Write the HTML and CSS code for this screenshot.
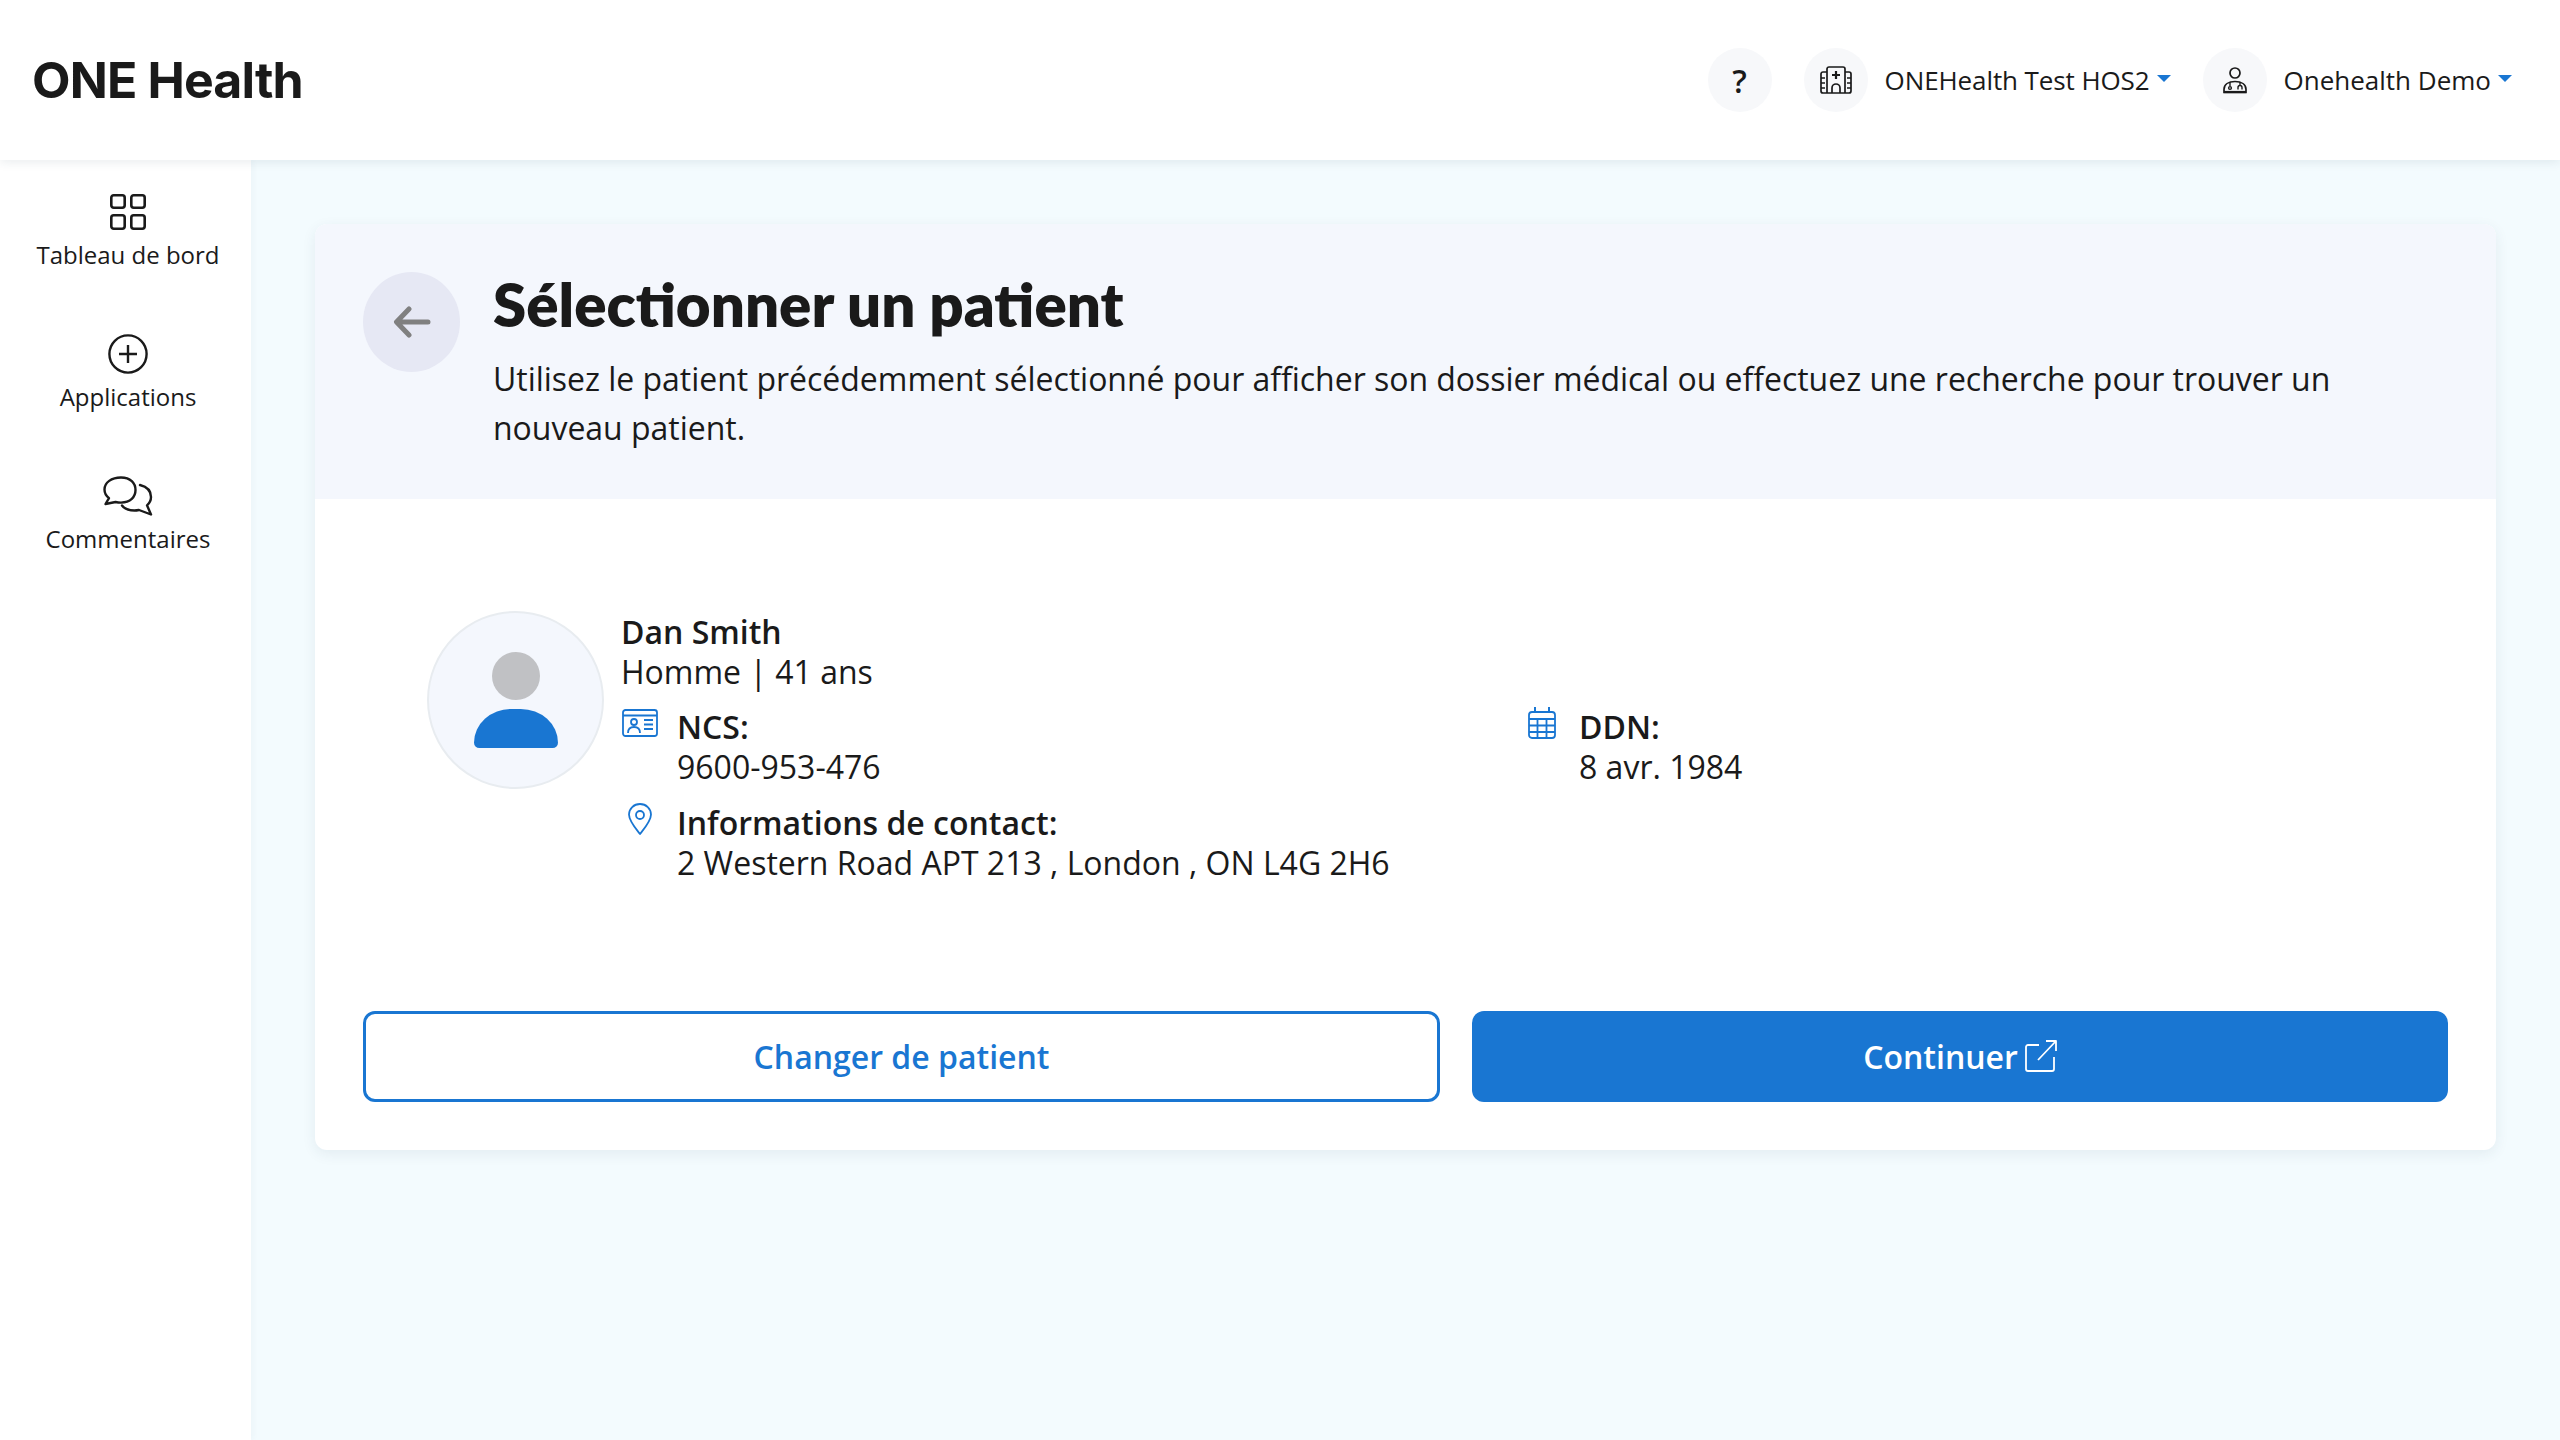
FILE: index.html
```html
<!DOCTYPE html>
<html lang="fr">
<head>
<meta charset="utf-8">
<title>ONE Health</title>
<link rel="stylesheet" href="styles.css">
</head>
<body>
<header class="topbar">
  <div class="logo">ONE Health</div>
  <div class="topbar-right">
    <div class="round-icon help">?</div>
    <div class="menu menu-hosp">
      <div class="round-icon">
        <svg class="ico-hosp" viewBox="0 0 32 28" fill="none" stroke="#1a1a1a" stroke-width="1.7">
          <path d="M7 6H3a2 2 0 0 0-2 2v17a2 2 0 0 0 2 2h26a2 2 0 0 0 2-2V8a2 2 0 0 0-2-2h-4"/>
          <path d="M7 27V3a2 2 0 0 1 2-2h14a2 2 0 0 1 2 2v24"/>
          <path d="M12 27v-5a4 4 0 0 1 8 0v5"/>
          <path d="M16 5v8M12 9h8" stroke-width="2.2"/>
          <path d="M1 12h4M1 17h4M1 22h4M27 12h4M27 17h4M27 22h4" stroke-width="1.4"/>
        </svg>
      </div>
      <span class="menu-label">ONEHealth Test HOS2</span>
      <span class="caret"></span>
    </div>
    <div class="menu">
      <div class="round-icon">
        <svg class="ico-user" viewBox="0 0 24 27" fill="none" stroke="#1a1a1a" stroke-width="1.7">
          <circle cx="12" cy="6" r="5"/>
          <path d="M1 25.500v-3c0-5 4.500-8 11-8s11 3 11 8v3z"/>
          <path d="M1 25h22" stroke-width="2.200"/>
          <path d="M7 15v4M17 15v3M15 22.500v-2a2 2 0 0 1 4 0v2" stroke-width="1.400"/>
          <circle cx="7" cy="21" r="1.400" stroke-width="1.400"/>
        </svg>
      </div>
      <span class="menu-label">Onehealth Demo</span>
      <span class="caret"></span>
    </div>
  </div>
</header>

<div class="shell">
  <nav class="sidebar">
    <a class="nav-item">
      <span class="nav-icon">
        <svg class="ico-grid" viewBox="0 0 36 36" fill="none" stroke="#1a1a1a" stroke-width="2.6">
          <rect x="1.300" y="1.300" width="13.400" height="12.400" rx="2.400"/>
          <rect x="21.300" y="1.300" width="13.400" height="12.400" rx="2.400"/>
          <rect x="1.300" y="21.300" width="13.400" height="13.400" rx="2.400"/>
          <rect x="21.300" y="21.300" width="13.400" height="13.400" rx="2.400"/>
        </svg>
      </span>
      <span class="nav-label">Tableau de bord</span>
    </a>
    <a class="nav-item">
      <span class="nav-icon">
        <svg class="ico-plus" viewBox="0 0 40 40" fill="none" stroke="#1a1a1a" stroke-width="2.4">
          <circle cx="20" cy="20" r="18.600"/>
          <path d="M20 11v18M11 20h18"/>
        </svg>
      </span>
      <span class="nav-label">Applications</span>
    </a>
    <a class="nav-item">
      <span class="nav-icon">
        <svg class="ico-chat" viewBox="0 0 50 40" fill="none" stroke="#1a1a1a" stroke-width="2.4" stroke-linecap="round" stroke-linejoin="round">
          <path d="M18 1.500C8.500 1.500 1.500 6.500 1.500 13.500c0 3.500 1.800 6.500 4.500 8.600L2.500 28l10-2c1.800.4 3.700.6 5.500.6 9.500 0 14.500-5.500 14.500-12.500S27.500 1.500 18 1.500z"/>
          <path d="M37 9c6 1.500 11 5.500 11 12 0 3.500-1.600 6.300-4 8.300l4 9.200-12-4.500c-1.500.3-3 .5-4.500.5-6 0-10-1.500-12.500-5"/>
        </svg>
      </span>
      <span class="nav-label">Commentaires</span>
    </a>
  </nav>

  <main class="content">
    <section class="card">
      <div class="card-head">
        <button class="back" aria-label="Retour">
          <svg class="ico-back" viewBox="0 0 38 32" fill="none" stroke="#808080" stroke-width="5" stroke-linecap="round" stroke-linejoin="round">
            <path d="M35 16H4M16 3L3.500 16 16 29"/>
          </svg>
        </button>
        <div class="head-text">
          <h1 class="title">Sélectionner un patient</h1>
          <p class="desc">Utilisez le patient précédemment sélectionné pour afficher son dossier médical ou effectuez une recherche pour trouver un nouveau patient.</p>
        </div>
      </div>

      <div class="card-body">
        <div class="patient">
          <div class="avatar">
            <span class="avatar-head"></span>
            <span class="avatar-body"></span>
          </div>
          <div class="info">
            <div class="name">Dan Smith</div>
            <div class="meta">Homme | 41 ans</div>
            <div class="fields">
              <div class="field field-ncs">
                <span class="field-icon">
                  <svg class="ico-id" viewBox="0 0 36 28" fill="none" stroke="#1976d2" stroke-width="1.8">
                    <rect x="1" y="1" width="34" height="26" rx="2.500"/>
                    <path d="M1 6.500h34" stroke-width="2"/>
                    <circle cx="12" cy="13" r="3"/>
                    <path d="M6 24c0-4 2.500-6 6-6s6 2 6 6"/>
                    <path d="M22 11h9M22 15.500h9M22 20h9" stroke-width="2"/>
                  </svg>
                </span>
                <div>
                  <div class="field-name">NCS:</div>
                  <div class="field-value">9600-953-476</div>
                </div>
              </div>
              <div class="field field-ddn">
                <span class="field-icon">
                  <svg class="ico-cal" viewBox="0 0 28 32" fill="none" stroke="#1976d2" stroke-width="1.8">
                    <rect x="1" y="5" width="26" height="26" rx="3"/>
                    <path d="M1 12h26M1 18.500h26M1 25h26M9.500 12v19M18.500 12v19"/>
                    <path d="M7 0v5M21 0v5" stroke-width="2"/>
                  </svg>
                </span>
                <div>
                  <div class="field-name">DDN:</div>
                  <div class="field-value">8 avr. 1984</div>
                </div>
              </div>
              <div class="field field-contact">
                <span class="field-icon">
                  <svg class="ico-pin" viewBox="0 0 24 32" fill="none" stroke="#1976d2" stroke-width="1.8" stroke-linejoin="round">
                    <path d="M12 1C5.900 1 1 5.600 1 11.500c0 6.500 7 14.500 11 19.500 4-5 11-13 11-19.500C23 5.600 18.100 1 12 1z"/>
                    <circle cx="12" cy="12" r="4"/>
                  </svg>
                </span>
                <div>
                  <div class="field-name">Informations de contact:</div>
                  <div class="field-value">2 Western Road APT 213 , London , ON L4G 2H6</div>
                </div>
              </div>
            </div>
          </div>
        </div>

        <div class="actions">
          <button class="btn btn-outline">Changer de patient</button>
          <button class="btn btn-solid">Continuer
            <svg class="ico-ext" viewBox="0 0 32 32" fill="none" stroke="#fff" stroke-width="1.8" stroke-linejoin="round">
              <path d="M14 5H3a2 2 0 0 0-2 2v22a2 2 0 0 0 2 2h24a2 2 0 0 0 2-2V17"/>
              <path d="M13 20L31 1M21 1h10v10"/>
            </svg>
          </button>
        </div>
      </div>
    </section>
  </main>
</div>
</body>
</html>
```

FILE: styles.css
```css
* { box-sizing: border-box; }
html, body { margin: 0; height: 100%; }
body {
  font-family: "Open Sans", "Liberation Sans", sans-serif;
  color: #1a1a1a;
  background: #f3fbfe;
  display: flex;
  flex-direction: column;
  min-height: 1440px;
  overflow: hidden;
}

.topbar {
  height: 160px;
  flex: none;
  background: #fff;
  display: flex;
  align-items: center;
  justify-content: space-between;
  padding: 0 48px 0 32px;
  position: relative;
  z-index: 2;
  box-shadow: 0 2px 10px rgba(40, 70, 90, 0.1);
}
.logo {
  font-family: Inter, "Liberation Sans", sans-serif;
  font-weight: 700;
  font-size: 50px;
  letter-spacing: -0.85px;
  line-height: 1;
  color: #1a1a1a;
}
.topbar-right { display: flex; align-items: center; gap: 32px; }
.round-icon {
  width: 64px;
  height: 64px;
  border-radius: 50%;
  background: #f7f8fa;
  display: flex;
  align-items: center;
  justify-content: center;
  flex: none;
}
.help { font-size: 32px; font-weight: 600; }
.menu { display: flex; align-items: center; }
.menu-label { font-size: 26px; margin-left: 17px; line-height: 40px; }
.menu-hosp .menu-label { letter-spacing: -0.1px; }
.caret {
  width: 0;
  height: 0;
  margin-left: 7px;
  margin-bottom: 4px;
  border-left: 7px solid transparent;
  border-right: 7px solid transparent;
  border-top: 7px solid #1976d2;
}
.ico-hosp { width: 32px; height: 28px; }
.ico-user { width: 24px; height: 27px; }

.shell { flex: 1; display: flex; min-height: 0; }
.sidebar {
  width: 251px;
  flex: none;
  background: #fff;
  padding: 32px 0 0 5px;
  display: flex;
  flex-direction: column;
  align-items: center;
  gap: 63px;
  box-shadow: 2px 0 6px rgba(40, 70, 90, 0.04);
}
.nav-item { display: flex; flex-direction: column; align-items: center; }
.nav-icon { height: 40px; display: flex; align-items: center; justify-content: center; }
.nav-label { margin-top: 7px; font-size: 24px; line-height: 32px; }
.ico-grid { width: 36px; height: 36px; }
.ico-plus { width: 40px; height: 40px; }
.ico-chat { width: 50px; height: 40px; }

.content { flex: 1; padding: 64px; min-width: 0; }
.card {
  background: #fff;
  border-radius: 12px;
  box-shadow: 0 4px 14px rgba(40, 70, 90, 0.08);
  overflow: hidden;
}
.card-head {
  background: #f4f7fd;
  padding: 48px 48px 47px;
  display: flex;
  align-items: flex-start;
  gap: 33px;
}
.back {
  width: 97px;
  height: 100px;
  border-radius: 50%;
  border: 0;
  padding: 0;
  background: #e6e8f4;
  flex: none;
  display: flex;
  align-items: center;
  justify-content: center;
}
.ico-back { width: 38px; height: 32px; }
.title {
  margin: 0 0 18px;
  font-family: Lato, "Liberation Sans", sans-serif;
  font-weight: 800;
  font-size: 60px;
  line-height: 64px;
  color: #1a1a1a;
}
.desc { margin: 0; font-size: 32px; line-height: 49px; letter-spacing: -0.025px; }

.card-body { padding: 112px 48px 48px; }
.patient { display: flex; padding-left: 64px; gap: 17px; }
.avatar {
  width: 177px;
  height: 178px;
  flex: none;
  border-radius: 50%;
  background: #f4f7fd;
  border: 2px solid #e8ecf0;
  display: flex;
  flex-direction: column;
  align-items: center;
  padding-top: 39px;
}
.avatar-head { width: 48px; height: 48px; border-radius: 50%; background: #c0c1c4; }
.avatar-body {
  width: 84px;
  height: 39px;
  margin-top: 9px;
  background: #1976d2;
  border-radius: 42px 42px 6px 6px / 38px 38px 6px 6px;
}
.info { flex: 1; min-width: 0; font-size: 32px; line-height: 40px; padding-top: 1px; }
.name { font-weight: 600; }
.fields {
  display: grid;
  grid-template-columns: 906px 1fr;
  row-gap: 16px;
  margin-top: 15px;
}
.field { display: flex; }
.field-name { font-weight: 600; }
.field-icon { flex: none; display: block; line-height: 0; }
.field-ncs .field-icon { width: 56px; padding: 2px 0 0 1px; }
.field-ddn .field-icon { width: 52px; padding-left: 1px; }
.field-contact { grid-column: 1 / -1; }
.field-contact .field-icon { width: 56px; padding-left: 7px; }
.ico-id { width: 36px; height: 28px; }
.ico-cal { width: 28px; height: 32px; }
.ico-pin { width: 24px; height: 32px; }

.actions {
  display: grid;
  grid-template-columns: 1077fr 976fr;
  gap: 32px;
  margin-top: 128px;
}
.btn {
  height: 91px;
  border-radius: 12px;
  font-family: inherit;
  font-size: 32px;
  font-weight: 600;
  display: flex;
  align-items: center;
  justify-content: center;
  gap: 7px;
}
.btn-outline { background: #fff; border: 3px solid #1976d2; color: #1976d2; }
.btn-solid { background: #1976d2; border: 0; color: #fff; }
.ico-ext { width: 32px; height: 32px; margin-bottom: 2px; }
```
